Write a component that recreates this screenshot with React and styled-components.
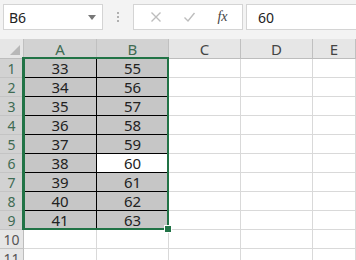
import styled, { createGlobalStyle } from 'styled-components';

const Global = createGlobalStyle`
  body {
    margin: 0;
    background: #ffffff;
    font-family: "Noto Sans", "Liberation Sans", sans-serif;
  }
`;

const Page = styled.div`
  width: 356px;
  height: 260px;
  overflow: hidden;
  background: #ffffff;
`;

const Toolbar = styled.div`
  height: 39px;
  box-sizing: border-box;
  background: #f3f3f3;
  display: flex;
  align-items: flex-start;
  padding-top: 4px;
  padding-left: 3px;
`;

const NameBox = styled.div`
  width: 100px;
  height: 26px;
  box-sizing: border-box;
  background: #fff;
  border: 1px solid #d4d4d4;
  display: flex;
  align-items: center;
  justify-content: space-between;
  padding: 0 6px 0 5px;
  font-size: 14px;
  color: #222;
`;

const Arrow = styled.span`
  width: 0;
  height: 0;
  border-left: 4px solid transparent;
  border-right: 4px solid transparent;
  border-top: 5px solid #777;
`;

const Dots = styled.div`
  width: 30px;
  height: 26px;
  display: flex;
  flex-direction: column;
  align-items: center;
  justify-content: center;
  gap: 2px;
  span {
    width: 2px;
    height: 2px;
    background: #b0b0b0;
  }
`;

const FxBox = styled.div`
  width: 110px;
  height: 26px;
  box-sizing: border-box;
  background: #fff;
  border: 1px solid #d4d4d4;
  display: flex;
  align-items: center;
  justify-content: space-around;
  padding: 0 4px 0 6px;
`;

const Fx = styled.span`
  font-family: "Liberation Serif", serif;
  font-style: italic;
  font-size: 14px;
  color: #444;
`;

const FormulaInput = styled.div`
  flex: 1;
  height: 26px;
  box-sizing: border-box;
  background: #fff;
  border: 1px solid #d4d4d4;
  border-right: none;
  margin-left: 3px;
  display: flex;
  align-items: center;
  padding-left: 11px;
  font-size: 14px;
  color: #222;
`;

const Grid = styled.div`
  display: grid;
  grid-template-columns: 24px 73px 72px 72px 72px 1fr;
  grid-template-rows: 20px repeat(11, 19px);
`;

const Slot = styled.div`
  grid-row: ${p => p.$r + 1};
  grid-column: ${p => p.$c + 1};
  box-sizing: border-box;
`;

const Cell = styled(Slot)`
  border-right: 1px solid ${p => (p.$data ? '#000' : '#d9d9d9')};
  border-bottom: 1px solid ${p => (p.$data ? '#000' : '#d9d9d9')};
  background: ${p => (p.$fill ? '#c6c6c6' : '#fff')};
  display: flex;
  align-items: flex-end;
  justify-content: center;
  font-size: 15px;
  line-height: 17px;
  color: #222;
`;

const ColHead = styled(Slot)`
  background: ${p => (p.$sel ? '#d2d2d2' : '#e6e6e6')};
  border-right: 1px solid #c0c0c0;
  border-bottom: 1px solid #bdbdbd;
  display: flex;
  align-items: flex-end;
  justify-content: center;
  font-size: 15px;
  line-height: 18px;
  color: ${p => (p.$sel ? '#3f6b53' : '#444')};
`;

const RowHead = styled(Slot)`
  background: ${p => (p.$sel ? '#d2d2d2' : '#e6e6e6')};
  border-right: 1px solid #bdbdbd;
  border-bottom: 1px solid #c4c4c4;
  display: flex;
  align-items: flex-end;
  justify-content: center;
  font-size: 14px;
  line-height: 17px;
  color: ${p => (p.$sel ? '#3f6b53' : '#555')};
`;

const Corner = styled(Slot)`
  background: #e6e6e6;
  border-right: 1px solid #c0c0c0;
  border-bottom: 1px solid #bdbdbd;
  display: flex;
  align-items: flex-end;
  justify-content: flex-end;
  padding: 0 3px 3px 0;
`;

const Triangle = styled.span`
  width: 0;
  height: 0;
  border-left: 10px solid transparent;
  border-bottom: 10px solid #b8b8b8;
`;

const Selection = styled.div`
  grid-column: 2 / 4;
  grid-row: 2 / 11;
  margin: -2px 0 0 -1px;
  border: 2px solid #217346;
  position: relative;
  z-index: 2;
  pointer-events: none;
`;

const Handle = styled.span`
  position: absolute;
  right: -5px;
  bottom: -5px;
  width: 6px;
  height: 6px;
  background: #217346;
  border: 1px solid #fff;
`;

const ColSelLine = styled.div`
  grid-column: 2 / 4;
  grid-row: 1 / 2;
  align-self: end;
  height: 2px;
  margin-left: -1px;
  background: #217346;
  z-index: 1;
`;

const RowSelLine = styled.div`
  grid-column: 1 / 2;
  grid-row: 2 / 11;
  justify-self: end;
  width: 2px;
  margin-top: -2px;
  background: #217346;
  z-index: 1;
`;

const cols = ['A', 'B', 'C', 'D', 'E'];
const rows = [
  [33, 55], [34, 56], [35, 57], [36, 58], [37, 59],
  [38, 60], [39, 61], [40, 62], [41, 63],
];

const Cross = () => (
  <svg width="12" height="12" viewBox="0 0 12 12">
    <path d="M1.5 1.5 L10.5 10.5 M10.5 1.5 L1.5 10.5" stroke="#bdbdbd" strokeWidth="1.4" fill="none" />
  </svg>
);

const Check = () => (
  <svg width="13" height="12" viewBox="0 0 13 12">
    <path d="M1.5 6.5 L5 10 L11.5 2" stroke="#bdbdbd" strokeWidth="1.4" fill="none" />
  </svg>
);

export default function App() {
  const cells = [];
  for (let r = 0; r < 11; r++) {
    const sel = r < 9;
    cells.push(<RowHead key={`rh${r}`} $r={r + 1} $c={0} $sel={sel}>{r + 1}</RowHead>);
    for (let c = 0; c < 5; c++) {
      const data = sel && c < 2;
      const fill = data && !(r === 5 && c === 1);
      cells.push(
        <Cell key={`c${r}-${c}`} $r={r + 1} $c={c + 1} $data={data} $fill={fill}>
          {data ? rows[r][c] : ''}
        </Cell>
      );
    }
  }

  return (
    <Page>
      <Global />
      <Toolbar>
        <NameBox>
          <span>B6</span>
          <Arrow />
        </NameBox>
        <Dots><span /><span /><span /></Dots>
        <FxBox>
          <Cross />
          <Check />
          <Fx>fx</Fx>
        </FxBox>
        <FormulaInput>60</FormulaInput>
      </Toolbar>
      <Grid>
        <Corner $r={0} $c={0}><Triangle /></Corner>
        {cols.map((c, i) => (
          <ColHead key={c} $r={0} $c={i + 1} $sel={i < 2}>{c}</ColHead>
        ))}
        {cells}
        <ColSelLine />
        <RowSelLine />
        <Selection>
          <Handle />
        </Selection>
      </Grid>
    </Page>
  );
}
